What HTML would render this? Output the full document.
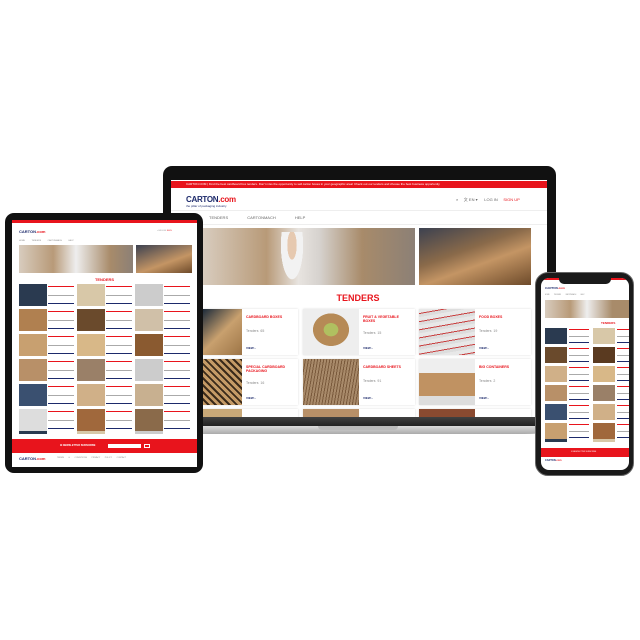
<!DOCTYPE html><html><head><style>
*{margin:0;padding:0;box-sizing:border-box}
body{width:640px;height:640px;background:#fff;position:relative;overflow:hidden;font-family:"Liberation Sans",sans-serif}
.a{position:absolute}
.red{color:#e8141c}
.card{position:absolute;background:#fff;box-shadow:0 0 2px rgba(0,0,0,.15)}
.box{background:linear-gradient(135deg,#c9a57a,#a57b4d 60,#8a6238)}
</style></head><body>
<!-- laptop base -->
<div class="a" style="left:160px;top:416px;width:402px;height:10px;background:linear-gradient(#444,#222);border-radius:2px"></div>
<div class="a" style="left:158px;top:426px;width:406px;height:8px;background:linear-gradient(#ddd,#aaa);border-radius:0 0 40px 40px/0 0 8px 8px"></div>
<div class="a" style="left:318px;top:426px;width:80px;height:4px;background:#bbb;border-radius:0 0 4px 4px"></div>
<!-- laptop bezel -->
<div class="a" style="left:163px;top:166px;width:393px;height:251px;background:#111;border-radius:9px 9px 0 0"></div>
<div class="a" style="left:171px;top:180px;width:376px;height:237px;background:#fff;overflow:hidden">
 <div class="a" style="left:0;top:1px;width:376px;height:7px;background:#e8141c;color:#fff;font-size:3px;line-height:7px;padding-left:15px">CARTON.COM | Find the best cardboard box tenders. Don't miss the opportunity to sell carton boxes in your geographic area! Check out our tenders and choose the best business opportunity</div>
 <div class="a" style="left:15px;top:15px;font-size:8px;font-weight:bold;color:#1d2a6b;letter-spacing:-.3px">CARTON<span class="red">.com</span></div>
 <div class="a" style="left:15px;top:24px;font-size:3px;color:#1d2a6b">the pillar of packaging industry</div>
 <div class="a" style="left:285px;top:17px;font-size:4px;color:#666">⌕ &nbsp;&nbsp;&nbsp; 文 EN ▾ &nbsp;&nbsp;&nbsp;&nbsp; LOG IN &nbsp;&nbsp;&nbsp; <span class="red">SIGN UP</span></div>
 <div class="a" style="left:0;top:30px;width:376px;height:1px;background:#eee"></div>
 <div class="a" style="left:38px;top:35px;font-size:4px;color:#666;word-spacing:18px">TENDERS CARTONMACH HELP</div>
 <div class="a" style="left:0;top:44px;width:376px;height:1px;background:#eee"></div>
 <div class="a" style="left:32px;top:48px;width:212px;height:57px;background:linear-gradient(90deg,#d8ccbe,#b89a78 30%,#e8e4e0 45%,#d6d2ce 55%,#a88b6a 75%,#8c8076)"></div>
 <div class="a" style="left:108px;top:52px;width:26px;height:53px;background:radial-gradient(ellipse at 50% 25%,#e6c9b0 0 25%,#f2f2f2 26% 60%,transparent 61%)"></div>
 <div class="a" style="left:248px;top:48px;width:112px;height:57px;background:linear-gradient(160deg,#3c4150,#8a6a4a 40%,#c49564 60%,#6d4a2a)"></div>
 <div class="a" style="left:0;top:113px;width:376px;text-align:center;font-size:9px;font-weight:bold;padding-left:-5px" ><span class="red" style="margin-left:-2px">TENDERS</span></div>
 <!-- cards -->
 <div class="card" style="left:32px;top:129px;width:95px;height:46px"><div class="a" style="left:0;top:0;width:39px;height:46px;background:linear-gradient(135deg,#1c2a3a,#c8a06e 50%,#9c7446)"></div><div class="a red" style="left:43px;top:6px;font-size:3.5px;font-weight:bold">CARDBOARD BOXES</div><div class="a" style="left:43px;top:20px;font-size:3.5px;color:#888">Tenders &nbsp;65</div><div class="a" style="left:43px;top:37px;font-size:3px;color:#1d2a6b;font-weight:bold">VIEW ›</div></div>
 <div class="card" style="left:132px;top:129px;width:112px;height:46px"><div class="a" style="left:0;top:0;width:56px;height:46px;background:radial-gradient(ellipse at 50% 45%,#b0c060 0 18%,#b68a56 19% 45%,#eee 46%)"></div><div class="a red" style="left:60px;top:6px;font-size:3.5px;font-weight:bold">FRUIT &amp; VEGETABLE<br>BOXES</div><div class="a" style="left:60px;top:22px;font-size:3.5px;color:#888">Tenders &nbsp;15</div><div class="a" style="left:60px;top:37px;font-size:3px;color:#1d2a6b;font-weight:bold">VIEW ›</div></div>
 <div class="card" style="left:248px;top:129px;width:112px;height:46px"><div class="a" style="left:0;top:0;width:56px;height:46px;background:repeating-linear-gradient(170deg,#e8e8e8 0 4px,#c84040 4px 5px,#ddd 5px 8px)"></div><div class="a red" style="left:60px;top:6px;font-size:3.5px;font-weight:bold">FOOD BOXES</div><div class="a" style="left:60px;top:20px;font-size:3.5px;color:#888">Tenders &nbsp;19</div><div class="a" style="left:60px;top:37px;font-size:3px;color:#1d2a6b;font-weight:bold">VIEW ›</div></div>
 <div class="card" style="left:32px;top:179px;width:95px;height:46px"><div class="a" style="left:0;top:0;width:39px;height:46px;background:repeating-linear-gradient(45deg,#c49a66 0 3px,#3a2a1a 3px 5px),#c49a66"></div><div class="a red" style="left:43px;top:6px;font-size:3.5px;font-weight:bold">SPECIAL CARDBOARD<br>PACKAGING</div><div class="a" style="left:43px;top:22px;font-size:3.5px;color:#888">Tenders &nbsp;16</div><div class="a" style="left:43px;top:37px;font-size:3px;color:#1d2a6b;font-weight:bold">VIEW ›</div></div>
 <div class="card" style="left:132px;top:179px;width:112px;height:46px"><div class="a" style="left:0;top:0;width:56px;height:46px;background:repeating-linear-gradient(100deg,#a88a6a 0 2px,#7a5a3c 2px 3px)"></div><div class="a red" style="left:60px;top:6px;font-size:3.5px;font-weight:bold">CARDBOARD SHEETS</div><div class="a" style="left:60px;top:20px;font-size:3.5px;color:#888">Tenders &nbsp;91</div><div class="a" style="left:60px;top:37px;font-size:3px;color:#1d2a6b;font-weight:bold">VIEW ›</div></div>
 <div class="card" style="left:248px;top:179px;width:112px;height:46px"><div class="a" style="left:0;top:0;width:56px;height:46px;background:linear-gradient(#eee 30%,#c09262 30% 80%,#ddd 80%)"></div><div class="a red" style="left:60px;top:6px;font-size:3.5px;font-weight:bold">BIG CONTAINERS</div><div class="a" style="left:60px;top:20px;font-size:3.5px;color:#888">Tenders &nbsp;2</div><div class="a" style="left:60px;top:37px;font-size:3px;color:#1d2a6b;font-weight:bold">VIEW ›</div></div>
 <div class="card" style="left:32px;top:229px;width:95px;height:20px"><div class="a" style="left:0;top:0;width:39px;height:20px;background:#c8a878"></div></div>
 <div class="card" style="left:132px;top:229px;width:112px;height:20px"><div class="a" style="left:0;top:0;width:56px;height:20px;background:#b89068"></div></div>
 <div class="card" style="left:248px;top:229px;width:112px;height:20px"><div class="a" style="left:0;top:0;width:56px;height:20px;background:#8a4a30"></div></div>
</div>
<!-- tablet -->
<div class="a" style="left:5px;top:213px;width:198px;height:260px;background:#111;border-radius:9px"></div>
<div class="a" style="left:12px;top:220px;width:185px;height:247px;background:#fff;overflow:hidden">
 <div class="a" style="left:0;top:0;width:185px;height:3px;background:#e8141c"></div>
 <div class="a" style="left:7px;top:9px;font-size:4px;font-weight:bold;color:#1d2a6b">CARTON<span class="red">.com</span></div>
 <div class="a" style="left:145px;top:10px;font-size:2px;color:#888">⌕ EN LOG <span class="red">SIGN</span></div>
 <div class="a" style="left:7px;top:20px;font-size:2px;color:#888;word-spacing:6px">HOME TENDERS CARTONMACH HELP</div>
 <div class="a" style="left:7px;top:25px;width:114px;height:28px;background:linear-gradient(90deg,#d8ccbe,#b89a78 30%,#eee 50%,#a88b6a 80%,#8c8076)"></div>
 <div class="a" style="left:124px;top:25px;width:56px;height:28px;background:linear-gradient(160deg,#3c4150,#c49564 60%,#6d4a2a)"></div>
 <div class="a red" style="left:0;top:57px;width:185px;text-align:center;font-size:4px;font-weight:bold">TENDERS</div>
 <div class="a" style="left:7px;top:64px;width:173px;height:152px;background:
  linear-gradient(90deg,transparent 28px,#fff 28px 58px,transparent 58px 86px,#fff 86px 116px,transparent 116px 144px,#fff 144px)"></div>
 <div class="a" style="left:7px;top:64px;width:173px;height:152px;background:repeating-linear-gradient(#0000 0 22px,#fff 22px 25px)"></div>
 <div class="a" style="left:7px;top:64px;width:28px;height:150px;background:repeating-linear-gradient(#2a3a50 0 22px,#fff 22px 25px,#b08050 25px 47px,#fff 47px 50px,#c8a070 50px 72px,#fff 72px 75px,#b89068 75px 97px,#fff 97px 100px,#3a5070 100px 122px,#fff 122px 125px,#ddd 125px 147px,#fff 147px)" ></div>
 <div class="a" style="left:65px;top:64px;width:28px;height:150px;background:repeating-linear-gradient(#d8c8a8 0 22px,#fff 22px 25px,#6a4a2c 25px 47px,#fff 47px 50px,#d8b888 50px 72px,#fff 72px 75px,#9a8068 75px 97px,#fff 97px 100px,#d0b088 100px 122px,#fff 122px 125px,#a0683c 125px 147px,#fff 147px)"></div>
 <div class="a" style="left:123px;top:64px;width:28px;height:150px;background:repeating-linear-gradient(#ccc 0 22px,#fff 22px 25px,#d0c0a8 25px 47px,#fff 47px 50px,#8a5a30 50px 72px,#fff 72px 75px,#ccc 75px 97px,#fff 97px 100px,#c8b090 100px 122px,#fff 122px 125px,#8a6a4a 125px 147px,#fff 147px)"></div>
 <div class="a" style="left:36px;top:66px;width:26px;height:150px;background:repeating-linear-gradient(#e8141c 0 1px,#fff 1px 9px,#aaa 9px 10px,#fff 10px 17px,#1d2a6b 17px 18px,#fff 18px 25px)"></div>
 <div class="a" style="left:94px;top:66px;width:26px;height:150px;background:repeating-linear-gradient(#e8141c 0 1px,#fff 1px 9px,#aaa 9px 10px,#fff 10px 17px,#1d2a6b 17px 18px,#fff 18px 25px)"></div>
 <div class="a" style="left:152px;top:66px;width:26px;height:150px;background:repeating-linear-gradient(#e8141c 0 1px,#fff 1px 9px,#aaa 9px 10px,#fff 10px 17px,#1d2a6b 17px 18px,#fff 18px 25px)"></div>
 <div class="a" style="left:0;top:219px;width:185px;height:14px;background:#e8141c"></div>
 <div class="a" style="left:48px;top:224px;font-size:2.5px;color:#fff;font-weight:bold">✉ NEWSLETTER SUBSCRIBE</div>
 <div class="a" style="left:96px;top:224px;width:33px;height:4px;background:#fff"></div>
 <div class="a" style="left:132px;top:224px;width:6px;height:4px;border:.5px solid #fff"></div>
 <div class="a" style="left:7px;top:236px;font-size:4px;font-weight:bold;color:#1d2a6b">CARTON<span class="red">.com</span></div>
 <div class="a" style="left:45px;top:237px;font-size:2px;color:#888;word-spacing:4px">TERMS &amp; CONDITIONS PRIVACY POLICY CONTACT</div>
</div>
<!-- phone -->
<div class="a" style="left:535px;top:272px;width:99px;height:204px;background:#1a1a1a;border-radius:13px;border:1px solid #666"></div>
<div class="a" style="left:541px;top:278px;width:88px;height:192px;background:#fff;border-radius:8px;overflow:hidden">
 <div class="a" style="left:0;top:0;width:88px;height:2px;background:#e8141c"></div>
 <div class="a" style="left:18px;top:0;width:52px;height:6px;background:#1a1a1a;border-radius:0 0 5px 5px"></div>
 <div class="a" style="left:4px;top:8px;font-size:3px;font-weight:bold;color:#1d2a6b">CARTON<span class="red">.com</span></div>
 <div class="a" style="left:4px;top:17px;font-size:1.5px;color:#888;word-spacing:4px">HOME TENDERS CARTONMACH HELP</div>
 <div class="a" style="left:4px;top:22px;width:84px;height:18px;background:linear-gradient(90deg,#d8ccbe,#b89a78 30%,#eee 50%,#a88b6a 80%)"></div>
 <div class="a red" style="left:60px;top:43px;font-size:3px;font-weight:bold">TENDERS</div>
 <div class="a" style="left:4px;top:50px;width:22px;height:114px;background:repeating-linear-gradient(#2a3a50 0 16px,#fff 16px 19px,#6a4a2c 19px 35px,#fff 35px 38px,#d0b088 38px 54px,#fff 54px 57px,#b89068 57px 73px,#fff 73px 76px,#3a5070 76px 92px,#fff 92px 95px,#c8a070 95px 111px,#fff 111px)"></div>
 <div class="a" style="left:52px;top:50px;width:22px;height:114px;background:repeating-linear-gradient(#d8c8a8 0 16px,#fff 16px 19px,#5a3a20 19px 35px,#fff 35px 38px,#d8b888 38px 54px,#fff 54px 57px,#9a8068 57px 73px,#fff 73px 76px,#d0b088 76px 92px,#fff 92px 95px,#a0683c 95px 111px,#fff 111px)"></div>
 <div class="a" style="left:28px;top:51px;width:20px;height:114px;background:repeating-linear-gradient(#e8141c 0 1px,#fff 1px 7px,#aaa 7px 8px,#fff 8px 13px,#1d2a6b 13px 14px,#fff 14px 19px)"></div>
 <div class="a" style="left:76px;top:51px;width:12px;height:114px;background:repeating-linear-gradient(#e8141c 0 1px,#fff 1px 7px,#aaa 7px 8px,#fff 8px 13px,#1d2a6b 13px 14px,#fff 14px 19px)"></div>
 <div class="a" style="left:0;top:170px;width:88px;height:9px;background:#e8141c"></div>
 <div class="a" style="left:30px;top:173px;font-size:1.8px;color:#fff">✉ NEWSLETTER SUBSCRIBE</div>
 <div class="a" style="left:4px;top:181px;font-size:2.5px;font-weight:bold;color:#1d2a6b">CARTON<span class="red">.com</span></div>
</div>
</body></html>
